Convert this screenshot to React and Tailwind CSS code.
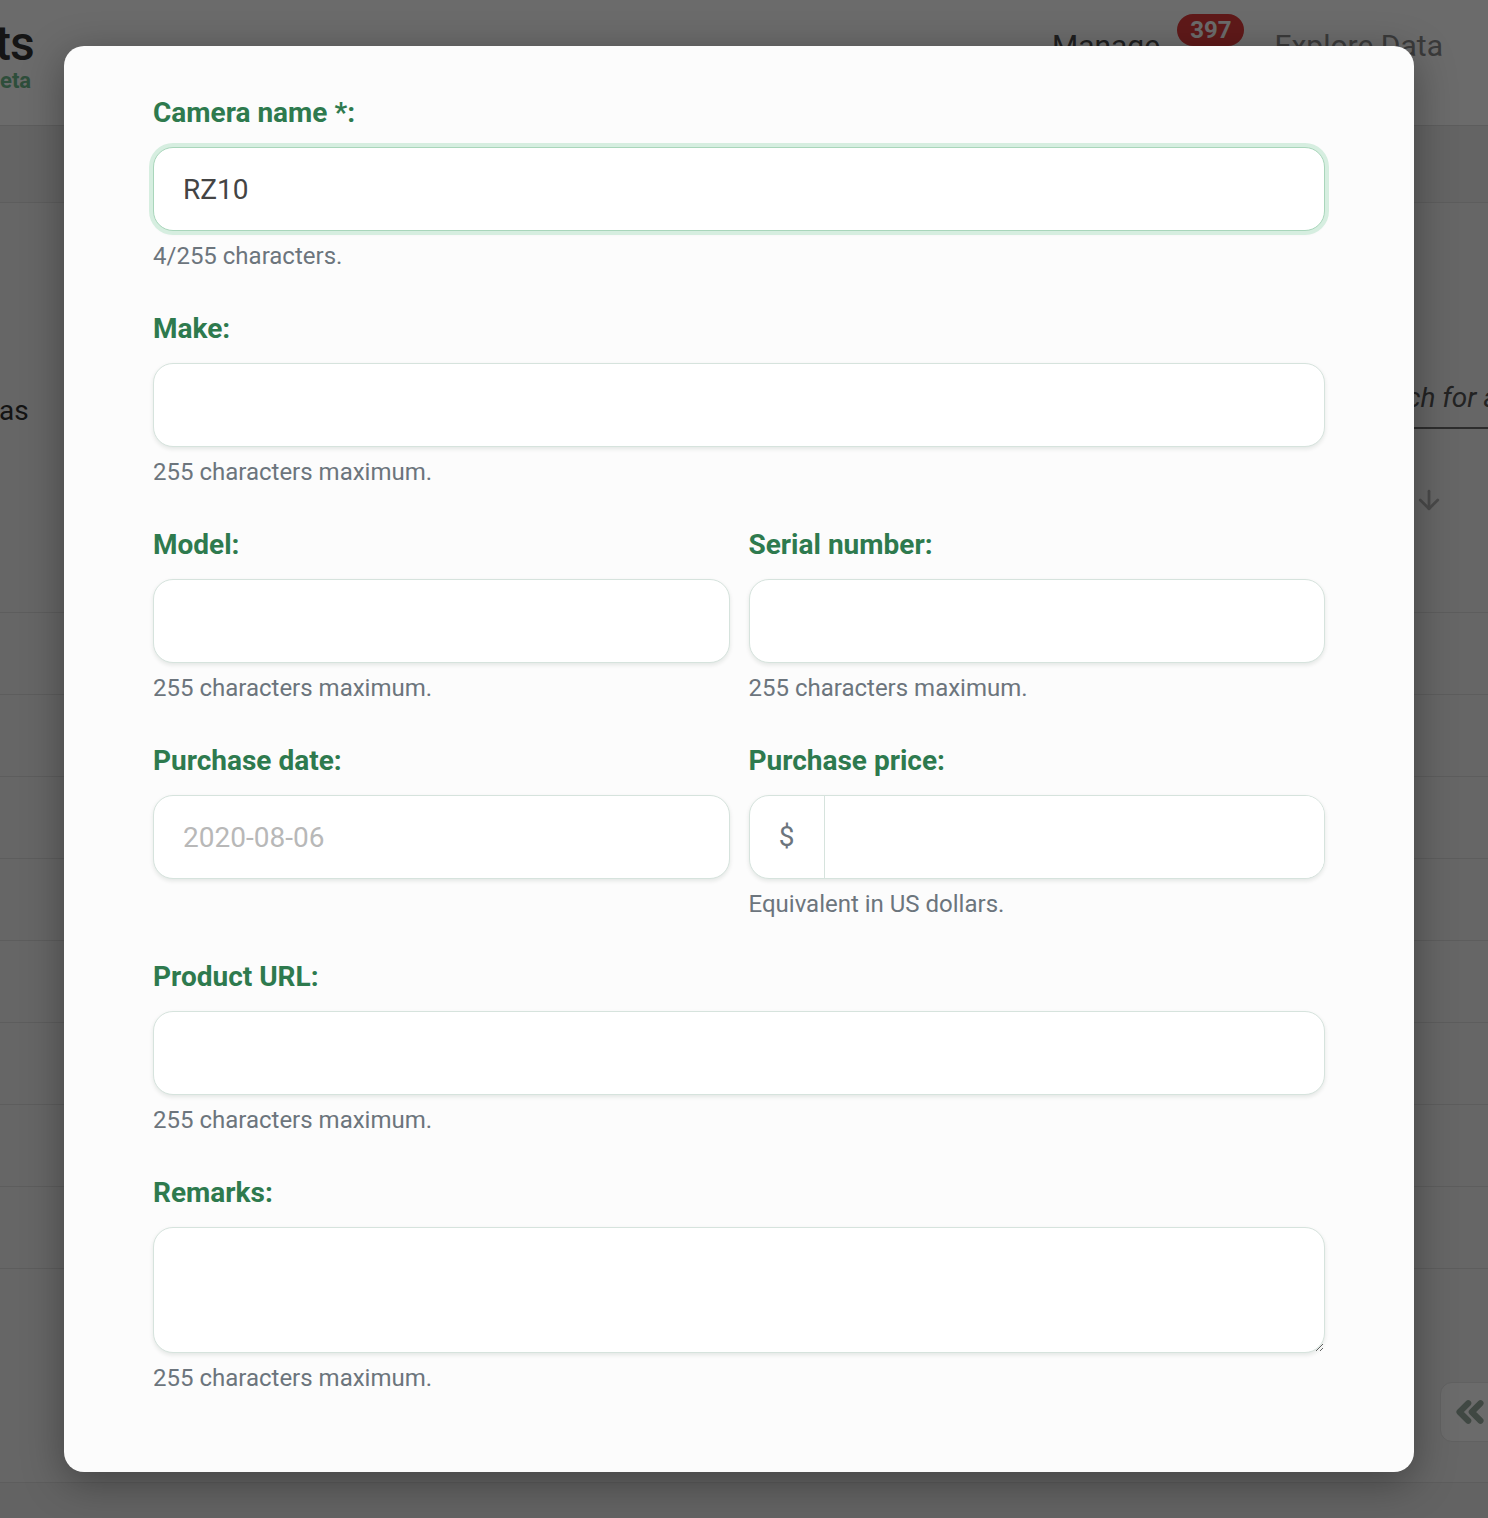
import React from "react";
import { ArrowDown, ChevronsLeft } from "lucide-react";

function Label({ children }) {
  return (
    <label className="block text-[28px] leading-[34px] font-bold text-[#2e7a4e] mb-[17px]">
      {children}
    </label>
  );
}

function Help({ children }) {
  return <p className="mt-[10px] text-[24px] leading-[30px] text-[#6c757d]">{children}</p>;
}

const inputCls =
  "block w-full h-[84px] rounded-[20px] border border-[#d6e3dd] bg-white px-[29px] text-[28px] text-[#444] shadow-[0_2px_4px_rgba(0,40,20,0.10)] outline-none placeholder:text-[#b8b8b8]";

export default function App() {
  return (
    <div className="relative w-[1488px] h-[1518px] overflow-hidden bg-[#f3f3f3] font-['Roboto','Liberation_Sans',sans-serif]">
      {/* background page */}
      <div className="flex flex-col h-full">
        <header className="h-[126px] shrink-0 bg-white border-b border-[#dddddd] flex justify-between">
          <div className="pt-[22px]">
            <div className="text-[48px] leading-[44px] font-medium text-[#333] -ml-[5px] tracking-[-1px]">ts</div>
            <div className="text-[22px] leading-[22px] font-bold text-[#6fb98c] mt-[4px]">eta</div>
          </div>
          <nav className="flex items-start pt-[25px] pr-[45px]">
            <span className="text-[30px] leading-[42px] text-[#4a4a4a]">Manage</span>
            <span className="ml-[17px] -mt-[11px] h-[32px] px-[13px] rounded-full bg-[#e23c3c] text-white text-[24px] leading-[32px] font-bold">
              397
            </span>
            <span className="ml-[30px] text-[30px] leading-[42px] text-[#8a8a8a]">Explore Data</span>
          </nav>
        </header>
        <div className="h-[77px] shrink-0 bg-[#efefef] border-b border-[#dddddd]"></div>
        <div className="h-[409px] shrink-0 flex justify-between">
          <div className="pt-[191px] -ml-[10px] text-[28px] leading-[34px] text-[#303030]">ras</div>
          <div className="w-[136px] pt-[178px] flex flex-col">
            <div className="border-b-2 border-[#6b6b6b] pb-[12px] whitespace-nowrap text-[28px] leading-[34px] italic text-[#555]">
              Search for a camera
            </div>
            <div className="mt-[56px] pl-[62px] text-[#b0b0b0]">
              <ArrowDown size={30} strokeWidth={2.25} />
            </div>
          </div>
        </div>
        <div className="border-t border-[#dddddd]">
          {Array.from({ length: 8 }).map((_, i) => (
            <div key={i} className="h-[82px] border-b border-[#dddddd]"></div>
          ))}
        </div>
        <div className="flex-1"></div>
        <footer className="h-[36px] shrink-0 border-t border-[#dddddd] bg-[#ededed]"></footer>
      </div>

      {/* floating collapse button */}
      <div className="absolute left-[1440px] top-[1382px] w-[70px] h-[60px] rounded-[12px] bg-white border border-[#e6e6e6] flex items-center pl-[8px] text-[#98ad9f]">
        <ChevronsLeft size={42} strokeWidth={3.5} />
      </div>

      {/* overlay */}
      <div className="absolute inset-0 bg-black/[0.58]"></div>

      {/* modal */}
      <div className="absolute left-[64px] top-[46px] w-[1350px] rounded-[20px] bg-[#fcfcfc] px-[89px] pt-[50px] pb-[38px] shadow-[0_10px_40px_rgba(0,0,0,0.35)]">
        <div className="mb-[41px]">
          <Label>Camera name *:</Label>
          <input
            className="block w-full h-[84px] rounded-[20px] border border-[#a9d6bb] bg-white px-[29px] text-[28px] text-[#444] outline-none shadow-[0_0_0_4px_#d6eee0,0_2px_4px_rgba(0,40,20,0.10)]"
            defaultValue="RZ10"
          />
          <Help>4/255 characters.</Help>
        </div>

        <div className="mb-[41px]">
          <Label>Make:</Label>
          <input className={inputCls} />
          <Help>255 characters maximum.</Help>
        </div>

        <div className="mb-[41px] grid grid-cols-2 gap-x-[19px]">
          <div>
            <Label>Model:</Label>
            <input className={inputCls} />
            <Help>255 characters maximum.</Help>
          </div>
          <div>
            <Label>Serial number:</Label>
            <input className={inputCls} />
            <Help>255 characters maximum.</Help>
          </div>
        </div>

        <div className="mb-[41px] grid grid-cols-2 gap-x-[19px]">
          <div>
            <Label>Purchase date:</Label>
            <input className={inputCls} placeholder="2020-08-06" />
          </div>
          <div>
            <Label>Purchase price:</Label>
            <div className="flex h-[84px] rounded-[20px] border border-[#d6e3dd] bg-white shadow-[0_2px_4px_rgba(0,40,20,0.10)] overflow-hidden">
              <span className="w-[75px] shrink-0 flex items-center justify-center border-r border-[#d6e3dd] text-[28px] text-[#6c757d]">
                $
              </span>
              <input className="flex-1 min-w-0 px-[20px] text-[28px] text-[#444] outline-none bg-white" />
            </div>
            <Help>Equivalent in US dollars.</Help>
          </div>
        </div>

        <div className="mb-[41px]">
          <Label>Product URL:</Label>
          <input className={inputCls} />
          <Help>255 characters maximum.</Help>
        </div>

        <div className="mb-[41px]">
          <Label>Remarks:</Label>
          <textarea className="block w-full h-[126px] rounded-[20px] border border-[#d6e3dd] bg-white px-[29px] py-[20px] text-[28px] text-[#444] shadow-[0_2px_4px_rgba(0,40,20,0.10)] outline-none resize-y"></textarea>
          <Help>255 characters maximum.</Help>
        </div>
      </div>
    </div>
  );
}
